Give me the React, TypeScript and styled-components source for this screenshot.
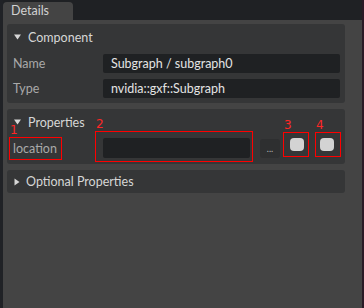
import React from "react";
import styled, { createGlobalStyle } from "styled-components";

const Global = createGlobalStyle`
  html, body { margin: 0; padding: 0; background: #444444; }
  body { font-family: Lato, "Noto Sans", sans-serif; font-size: 12px; }
  #root { width: 364px; height: 308px; }
`;

const Shell = styled.div`
  display: flex;
  width: 364px;
  height: 308px;
  overflow: hidden;
`;

const LeftStrip = styled.div`
  width: 3px;
  background: #202226;
`;

const RightEdge = styled.div`
  width: 2px;
  background: #2a1a26;
`;

const Main = styled.div`
  flex: 1;
  display: flex;
  flex-direction: column;
  min-width: 0;
`;

const TabBar = styled.div`
  height: 20px;
  background: #1f2124;
  display: flex;
  align-items: flex-end;
`;

const Tab = styled.div`
  width: 70px;
  height: 18px;
  background: #444444;
  border-radius: 4px 4px 0 0;
  color: #d2d2d2;
  padding-left: 8px;
  box-sizing: border-box;
  line-height: 18px;
  font-size: 12.5px;
`;

const Panel = styled.div`
  flex: 1;
  background: #444444;
  padding: 4px 17px 0 4px;
  display: flex;
  flex-direction: column;
  gap: 6px;
`;

const Section = styled.div<{ $pb?: number }>`
  background: #353637;
  border-radius: 3px;
  padding: 0 5px ${(p) => p.$pb ?? 0}px 6px;
  display: flex;
  flex-direction: column;
`;

const Header = styled.div<{ $h: number }>`
  height: ${(p) => p.$h}px;
  display: flex;
  align-items: center;
  color: #d6d6d6;
  font-size: 12.5px;
`;

const Arrow = styled.span<{ $w: number }>`
  width: ${(p) => p.$w}px;
  display: inline-flex;
  align-items: center;
  padding-left: 1px;
  box-sizing: border-box;
`;

const Rows = styled.div`
  display: flex;
  flex-direction: column;
  gap: 6px;
  padding-top: 4px;
`;

const Row = styled.div`
  height: 19px;
  display: flex;
  align-items: center;
`;

const PropRow = styled.div`
  height: 26px;
  display: flex;
  align-items: flex-start;
`;

const Label = styled.div`
  width: 90px;
  color: #a9a9a9;
  font-size: 12.5px;
  flex-shrink: 0;
`;

const Field = styled.div<{ $h: number; $w?: number }>`
  height: ${(p) => p.$h}px;
  ${(p) => (p.$w ? `width: ${p.$w}px; flex-shrink: 0;` : "flex: 1;")}
  background: #1f2123;
  border-radius: 2px;
  color: #e4e4e4;
  padding-left: 8px;
  box-sizing: border-box;
  display: flex;
  align-items: center;
  font-size: 12.5px;
`;

const Marked = styled.div<{
  $ml: number;
  $mt: number;
  $w: number;
  $h: number;
  $pl: number;
  $pt: number;
}>`
  position: relative;
  flex-shrink: 0;
  margin-left: ${(p) => p.$ml}px;
  margin-top: ${(p) => p.$mt}px;
  width: ${(p) => p.$w}px;
  height: ${(p) => p.$h}px;
  padding: ${(p) => p.$pt + 1}px 0 0 ${(p) => p.$pl + 1}px;
  box-sizing: border-box;
  outline: 1px solid #ff0000;
  outline-offset: -1px;
  display: flex;
  align-items: flex-start;
`;

const MarkNum = styled.span`
  position: absolute;
  left: 1px;
  bottom: 100%;
  color: #ff2626;
  font-family: "DejaVu Sans", sans-serif;
  font-size: 12px;
  line-height: 13px;
`;

const MarkLabel = styled.span`
  color: #a9a9a9;
  font-size: 12.5px;
  line-height: 21px;
`;

const DotsButton = styled.div`
  width: 20px;
  height: 19px;
  margin: 4px 0 0 7px;
  flex-shrink: 0;
  background: #2e2f30;
  border-radius: 3px;
  color: #b8b8b8;
  font-size: 9px;
  display: flex;
  align-items: flex-end;
  justify-content: center;
  line-height: 12px;
  box-sizing: border-box;
  padding-bottom: 3px;
`;

const Knob = styled.div`
  width: 14px;
  height: 13px;
  background: #d3d3d3;
  border-radius: 4px;
`;

const Down = () => (
  <svg width="7" height="6" viewBox="0 0 7 6">
    <path d="M0 0.5 L7 0.5 L3.5 5.5 Z" fill="#d6d6d6" />
  </svg>
);

const Right = () => (
  <svg width="6" height="8" viewBox="0 0 6 8">
    <path d="M0.5 0.5 L5.5 4 L0.5 7.5 Z" fill="#d6d6d6" />
  </svg>
);

export default function App() {
  return (
    <Shell>
      <Global />
      <LeftStrip />
      <Main>
        <TabBar>
          <Tab>Details</Tab>
        </TabBar>
        <Panel>
          <Section $pb={5}>
            <Header $h={26}>
              <Arrow $w={15}>
                <Down />
              </Arrow>
              Component
            </Header>
            <Rows>
              <Row>
                <Label>Name</Label>
                <Field $h={19}>Subgraph / subgraph0</Field>
              </Row>
              <Row>
                <Label>Type</Label>
                <Field $h={19}>nvidia::gxf::Subgraph</Field>
              </Row>
            </Rows>
          </Section>
          <Section $pb={3}>
            <Header $h={26}>
              <Arrow $w={15}>
                <Down />
              </Arrow>
              Properties
            </Header>
            <PropRow>
              <Marked $ml={-4} $mt={2} $w={53} $h={23} $pl={3} $pt={0}>
                <MarkNum>1</MarkNum>
                <MarkLabel>location</MarkLabel>
              </Marked>
              <Marked $ml={33} $mt={-4} $w={158} $h={31} $pl={7} $pt={6}>
                <MarkNum>2</MarkNum>
                <Field $h={20} $w={147} />
              </Marked>
              <DotsButton>...</DotsButton>
              <Marked $ml={3} $mt={-3} $w={26} $h={25} $pl={6} $pt={5}>
                <MarkNum>3</MarkNum>
                <Knob />
              </Marked>
              <Marked $ml={6} $mt={-3} $w={26} $h={25} $pl={4} $pt={5}>
                <MarkNum>4</MarkNum>
                <Knob />
              </Marked>
            </PropRow>
          </Section>
          <Section>
            <Header $h={23}>
              <Arrow $w={13}>
                <Right />
              </Arrow>
              Optional Properties
            </Header>
          </Section>
        </Panel>
      </Main>
      <RightEdge />
    </Shell>
  );
}
